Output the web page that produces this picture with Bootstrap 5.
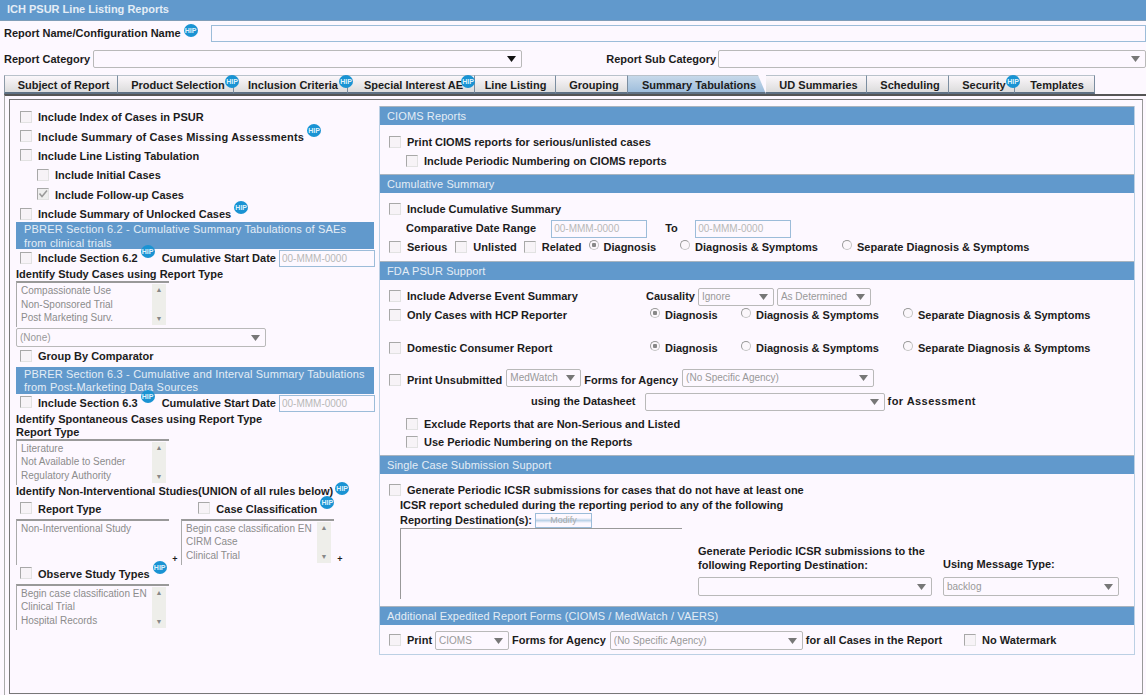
<!DOCTYPE html>
<html lang="en">
<head>
  <meta charset="UTF-8" />
  <title>ICH PSUR Line Listing Reports</title>
  <link href="https://cdn.jsdelivr.net/npm/bootstrap@5.3.0/dist/css/bootstrap.min.css" rel="stylesheet" />
  <style>
    html, body { height: 695px; overflow: hidden; }
    body { background: #fdf8ff; font: bold 11px/13px "Liberation Sans", Arial, sans-serif; color: #1c1c1c; }
    .page-title { height: 21px; background: #6199cc; color: #e4edf6; padding: 2px 7px 0; border-bottom: 1px solid #7f9db8; line-height: 15px; font-size: 11px; }
    .line { display: flex; align-items: center; flex-shrink: 0; white-space: nowrap; }
    .txt-in { border: 1px solid #9cbcd9; background: #fdf8ff; height: 17px; padding: 0 2px; font: 10px/15px "Liberation Sans", sans-serif; color: #b0b0b0; }
    .txt-in::placeholder { color: #b8b8b8; opacity: 1; }
    .sel { appearance: none; border: 1px solid #b9b9b9; border-radius: 2px; background: #fdf8ff url("data:image/svg+xml,%3Csvg xmlns='http://www.w3.org/2000/svg' width='9' height='6'%3E%3Cpath d='M0 0h9L4.500 6z' fill='%23777'/%3E%3C/svg%3E") no-repeat right 5px center; height: 18px; padding: 0 14px 0 3px; font: 10px/16px "Liberation Sans", sans-serif; color: #999; flex-shrink: 0; }
    .cbx { appearance: none; width: 12px; height: 12px; flex-shrink: 0; margin: 0 6px 0 0; border: 1px solid #a8a8a8; border-right-color: #e2e2e2; border-bottom-color: #e2e2e2; background: #f7f3f7; position: relative; top: -1px; }
    .cbx:checked { background: #eee url("data:image/svg+xml,%3Csvg xmlns='http://www.w3.org/2000/svg' width='10' height='10'%3E%3Cpath d='M1.500 4.500l2.500 3 5-6' fill='none' stroke='%23999' stroke-width='1.500'/%3E%3C/svg%3E") no-repeat center; }
    .rdo { appearance: none; width: 10px; height: 10px; flex-shrink: 0; margin: 0 5px 0 0; border-radius: 50%; border: 1px solid #c4c4c4; border-left-color: #999; border-top-color: #999; background: #fbf7fb; position: relative; top: -3px; }
    .rdo:checked { background: radial-gradient(circle, #888 0 2px, #fbf7fb 2.500px); }
    .hip { display: inline-block; position: relative; width: 14px; height: 13px; border-radius: 50%; background: #1a93d3; color: #dff1fb; font: bold 7px/13px "Liberation Sans", sans-serif; text-align: center; flex-shrink: 0; overflow: hidden; z-index: 2; }

    /* top form */
    .name-row { height: 24px; padding-left: 4px; }
    .name-row .hip { top: -3px; margin-left: 3px; }
    .name-input { margin-left: 13px; flex-grow: 1; height: 17px; }
    .cat-row { height: 30px; padding: 0 0 2px 4px; }
    .cat-a { width: 429px; margin-left: 3px; background-image: url("data:image/svg+xml,%3Csvg xmlns='http://www.w3.org/2000/svg' width='9' height='6'%3E%3Cpath d='M0 0h9L4.500 6z' fill='%23111'/%3E%3C/svg%3E"); }
    .cat-lbl { margin-left: 84px; }
    .cat-b { margin-left: 2px; flex-grow: 1; }

    /* tabs */
    .tab-strip { height: 19px; margin-left: 4px; flex-wrap: nowrap; }
    .tab-strip .nav-link { position: relative; display: block; height: 19px; padding: 0 0 0 5px; color: #1c1c1c; font-size: 11px; line-height: 19px; text-align: center; border: 0; border-top: 1px solid #b9c2cb; border-right: 1px solid #7b8da0; border-bottom: 2px solid #5f7184; border-radius: 0; background: linear-gradient(#fbf7fb, #dcdcdc); white-space: nowrap; }
    .tab-strip li:first-child .nav-link { border-left: 1px solid #8d9aa8; }
    .tab-strip .nav-link.active { background: linear-gradient(#c7d9ea, #9fbedc); color: #1c1c1c; clip-path: polygon(0 0, calc(100% - 8px) 0, 100% 100%, 0 100%); }
    .tab-strip .hip { position: absolute; right: -6px; top: -1px; }
    .tab-strip .t4 .hip { right: -1px; }
    .tab-strip .t5 .nav-link { padding-left: 1px; }
    .t1 { width: 114px; } .t2 { width: 116px; } .t3 { width: 114px; } .t4 { width: 127px; } .t5 { width: 81px; } .t6 { width: 72px; }
    .t7 { width: 138px; } .t8 { width: 101px; } .t9 { width: 82px; } .t10 { width: 66px; } .t11 { width: 80px; }

    .tab-body { height: 601px; margin-left: 4px; border-top: 2px solid #555; border-left: 1px solid #aaa; padding: 3px 3px 0 4px; }
    .frame { height: 595px; border: 1px solid #777; border-right-color: #999; display: flex; gap: 5px; padding-left: 6px; }

    /* left column */
    .left-col { width: 358px; flex-shrink: 0; position: relative; padding-top: 8px; }
    .left-col > .line { height: 19.100px; padding-left: 4px; }
    .left-col > .line.opt { height: 19.400px; }
    .left-col > .line.sub { padding-left: 21px; }
    .left-col > .flat { padding-left: 0; height: 13px; }
    .left-col .hip { top: -7px; margin-left: 3px; }
    .left-col .hip-nis { margin-left: 2px; top: -3px; }
    .wide-txt { letter-spacing: .18px; }
    .blue-head { background: #6199cc; color: #e4edf6; font-weight: normal; letter-spacing: .17px; padding: 1px 8px 0; height: 27px; line-height: 13.500px; white-space: nowrap; }
    .first-head { margin-top: -2px; }
    .start-lbl { margin-left: 7px; }
    .date62 { width: 96px; margin-left: 3px; }
    .list-box { width: 153px; height: 46px; display: flex; border-top: 2px solid #999; border-left: 1px solid #aaa; font: 10px/13.500px "Liberation Sans", sans-serif; color: #8c8c8c; flex-shrink: 0; background: #fdf8ff; }
    .list-items { flex-grow: 1; padding: 1px 0 0 4px; overflow: hidden; white-space: nowrap; }
    .list-scroll { width: 14px; margin: 1px 3px 0 0; background: #eeeeea; color: #888; display: flex; flex-direction: column; justify-content: space-between; align-items: center; font-size: 7px; line-height: 12px; flex-shrink: 0; height: 41px; }
    .none-sel { width: 250px; height: 19px; display: block; margin-top: 1px; }
    .two-lists { display: flex; align-items: flex-end; }
    .type-row { margin-top: 2px; }
    .plus { width: 12px; margin-bottom: 2px; text-align: center; font-size: 9px; line-height: 8px; }
    .case-cb { margin-left: 97px; }

    /* right column */
    .right-col { width: 756px; height: 549px; margin-top: 6px; border: 1px solid #bcd0e4; border-top: 0; flex-shrink: 0; }
    .sec-head { background: #6199cc; color: #e4edf6; font-weight: normal; letter-spacing: .12px; height: 19px; padding: 2px 7px 0; line-height: 15px; border-top: 1px solid #a9b4bf; }
    .sec-cioms { height: 49px; padding-top: 8px; }
    .sec-cum { height: 68px; padding-top: 7px; }
    .sec-fda { height: 175px; padding-top: 7px; }
    .sec-single { height: 132px; position: relative; padding-top: 7px; }
    .sec-add { padding-top: 6px; }
    .rline { height: 19px; padding-left: 9px; }
    .rsub { padding-left: 26px; }
    .date-a { width: 96px; margin-left: 15px; height: 18px; }
    .to-lbl { margin-left: 18px; width: 30px; }
    .date-b { width: 96px; height: 18px; }
    .ml-u { margin-left: 8px; } .ml-r { margin-left: 7px; } .ml-d { margin-left: 7px; }
    .ml-ds { margin-left: 24px; } .ml-sd { margin-left: 24px; }
    .cause { margin-left: -4px; }
    .s-ign { width: 76px; margin-left: 3px; } .s-det { width: 94px; margin-left: 3px; }
    .fda-rad { width: 243px; flex-shrink: 0; }
    .rad-d { width: 91px; display: flex; flex-shrink: 0; align-items: center; }
    .rad-ds { width: 162px; display: flex; flex-shrink: 0; align-items: center; }
    .s-med { width: 75px; margin: 0 3px 0 4px; } .s-agency { width: 192px; margin-left: 4px; }
    .s-data { width: 240px; margin: 0 3px 0 9px; }
    .assess { letter-spacing: .45px; }
    .h-dom { height: 30px; } .h-print { height: 32px; } .h-data { height: 29px; } .h-excl { height: 17px; }
    .ds-lbl { padding-left: 151px; }
    .dest-lbl { padding-left: 20px; height: 15px; }
    .dest-top { margin-top: -2px; }
    .modify { width: 57px; height: 15px; padding: 0; margin-left: 3px; border: 1px solid #9cbcd9; border-radius: 0; background: linear-gradient(#fdf8ff 30%, #bcd3e8 50%, #fdf8ff 70%); color: #aaa; font: 9px/13px "Liberation Sans", sans-serif; }
    .dest-box { margin-left: 20px; width: 282px; height: 71px; border-top: 1px solid #999; border-left: 1px solid #999; }
    .gen-lbl { position: absolute; left: 318px; top: 70px; line-height: 14px; }
    .msg-lbl { position: absolute; left: 563px; top: 84px; }
    .s-gen { position: absolute; left: 318px; top: 103px; width: 234px; height: 19px; }
    .s-msg { position: absolute; left: 563px; top: 103px; width: 176px; height: 19px; }
    .s-cioms { width: 74px; margin: 0 3px 0 3px; height: 19px; } .s-ag2 { width: 193px; margin: 0 3px 0 4px; height: 19px; }
    .water { margin-left: 22px; }
  </style>
</head>
<body>
  <div class="page-title">ICH PSUR Line Listing Reports</div>

  <div class="line name-row">Report Name/Configuration Name<span class="hip">HIP</span><input class="txt-in name-input" type="text" /></div>
  <div class="line cat-row">
    <span>Report Category</span><select class="sel cat-a"></select>
    <span class="cat-lbl">Report Sub Category</span><select class="sel cat-b"></select>
  </div>

  <ul class="nav tab-strip">
    <li class="t1"><a class="nav-link" href="#">Subject of Report</a></li>
    <li class="t2"><a class="nav-link" href="#">Product Selection<span class="hip">HIP</span></a></li>
    <li class="t3"><a class="nav-link" href="#">Inclusion Criteria<span class="hip">HIP</span></a></li>
    <li class="t4"><a class="nav-link" href="#">Special Interest AE<span class="hip">HIP</span></a></li>
    <li class="t5"><a class="nav-link" href="#">Line Listing</a></li>
    <li class="t6"><a class="nav-link" href="#">Grouping</a></li>
    <li class="t7"><a class="nav-link active" href="#">Summary Tabulations</a></li>
    <li class="t8"><a class="nav-link" href="#">UD Summaries</a></li>
    <li class="t9"><a class="nav-link" href="#">Scheduling</a></li>
    <li class="t10"><a class="nav-link" href="#">Security<span class="hip">HIP</span></a></li>
    <li class="t11"><a class="nav-link" href="#">Templates</a></li>
  </ul>

  <div class="tab-body">
    <div class="frame">
      <div class="left-col">
        <div class="line opt"><input class="cbx" type="checkbox" disabled /><span>Include Index of Cases in PSUR</span></div>
        <div class="line opt"><input class="cbx" type="checkbox" disabled /><span class="wide-txt">Include Summary of Cases Missing Assessments</span><span class="hip">HIP</span></div>
        <div class="line opt"><input class="cbx" type="checkbox" disabled /><span>Include Line Listing Tabulation</span></div>
        <div class="line opt sub"><input class="cbx" type="checkbox" disabled /><span>Include Initial Cases</span></div>
        <div class="line opt sub"><input class="cbx" type="checkbox" checked disabled /><span>Include Follow-up Cases</span></div>
        <div class="line opt"><input class="cbx" type="checkbox" disabled /><span>Include Summary of Unlocked Cases</span><span class="hip">HIP</span></div>

        <div class="blue-head first-head">PBRER Section 6.2 - Cumulative Summary Tabulations of SAEs<br />from clinical trials</div>
        <div class="line"><input class="cbx" type="checkbox" disabled /><span>Include Section 6.2</span><span class="hip">HIP</span><span class="start-lbl">Cumulative Start Date</span><input class="txt-in date62" type="text" placeholder="00-MMM-0000" disabled /></div>
        <div class="line flat">Identify Study Cases using Report Type</div>
        <div class="list-box">
          <div class="list-items">Compassionate Use<br />Non-Sponsored Trial<br />Post Marketing Surv.</div>
          <div class="list-scroll"><span>▲</span><span>▼</span></div>
        </div>
        <select class="sel none-sel"><option>(None)</option></select>
        <div class="line"><input class="cbx" type="checkbox" disabled /><span>Group By Comparator</span></div>

        <div class="blue-head">PBRER Section 6.3 - Cumulative and Interval Summary Tabulations<br />from Post-Marketing Data Sources</div>
        <div class="line"><input class="cbx" type="checkbox" disabled /><span>Include Section 6.3</span><span class="hip">HIP</span><span class="start-lbl">Cumulative Start Date</span><input class="txt-in date62" type="text" placeholder="00-MMM-0000" disabled /></div>
        <div class="line flat">Identify Spontaneous Cases using Report Type</div>
        <div class="line flat">Report Type</div>
        <div class="list-box">
          <div class="list-items">Literature<br />Not Available to Sender<br />Regulatory Authority</div>
          <div class="list-scroll"><span>▲</span><span>▼</span></div>
        </div>
        <div class="line flat">Identify Non-Interventional Studies(UNION of all rules below)<span class="hip hip-nis">HIP</span></div>
        <div class="line type-row">
          <input class="cbx" type="checkbox" disabled /><span>Report Type</span>
          <input class="cbx case-cb" type="checkbox" disabled /><span>Case Classification</span><span class="hip">HIP</span>
        </div>
        <div class="two-lists">
          <div class="list-box">
            <div class="list-items">Non-Interventional Study</div>
          </div>
          <span class="plus">+</span>
          <div class="list-box">
            <div class="list-items">Begin case classification EN<br />CIRM Case<br />Clinical Trial</div>
            <div class="list-scroll"><span>▲</span><span>▼</span></div>
          </div>
          <span class="plus">+</span>
        </div>
        <div class="line"><input class="cbx" type="checkbox" disabled /><span>Observe Study Types</span><span class="hip">HIP</span></div>
        <div class="list-box">
          <div class="list-items">Begin case classification EN<br />Clinical Trial<br />Hospital Records</div>
          <div class="list-scroll"><span>▲</span><span>▼</span></div>
        </div>
      </div>

      <div class="right-col">
        <div class="sec-head">CIOMS Reports</div>
        <div class="sec-cioms">
          <div class="line rline"><input class="cbx" type="checkbox" disabled />Print CIOMS reports for serious/unlisted cases</div>
          <div class="line rline rsub"><input class="cbx" type="checkbox" disabled />Include Periodic Numbering on CIOMS reports</div>
        </div>

        <div class="sec-head">Cumulative Summary</div>
        <div class="sec-cum">
          <div class="line rline"><input class="cbx" type="checkbox" disabled />Include Cumulative Summary</div>
          <div class="line rline rsub">Comparative Date Range<input class="txt-in date-a" type="text" placeholder="00-MMM-0000" disabled /><span class="to-lbl">To</span><input class="txt-in date-b" type="text" placeholder="00-MMM-0000" disabled /></div>
          <div class="line rline">
            <input class="cbx" type="checkbox" disabled />Serious
            <input class="cbx ml-u" type="checkbox" disabled />Unlisted
            <input class="cbx ml-r" type="checkbox" disabled />Related
            <input class="rdo ml-d" type="radio" name="cum" checked disabled />Diagnosis
            <input class="rdo ml-ds" type="radio" name="cum" disabled />Diagnosis &amp; Symptoms
            <input class="rdo ml-sd" type="radio" name="cum" disabled />Separate Diagnosis &amp; Symptoms
          </div>
        </div>

        <div class="sec-head">FDA PSUR Support</div>
        <div class="sec-fda">
          <div class="line rline"><input class="cbx" type="checkbox" disabled /><span class="fda-rad">Include Adverse Event Summary</span><span class="cause">Causality</span><select class="sel s-ign"><option>Ignore</option></select><select class="sel s-det"><option>As Determined</option></select></div>
          <div class="line rline"><input class="cbx" type="checkbox" disabled /><span class="fda-rad">Only Cases with HCP Reporter</span><span class="rad-d"><input class="rdo" type="radio" name="hcp" checked disabled />Diagnosis</span><span class="rad-ds"><input class="rdo" type="radio" name="hcp" disabled />Diagnosis &amp; Symptoms</span><span class="d-flex align-items-center"><input class="rdo" type="radio" name="hcp" disabled />Separate Diagnosis &amp; Symptoms</span></div>
          <div class="line rline h-dom align-items-end"><input class="cbx" type="checkbox" disabled /><span class="fda-rad">Domestic Consumer Report</span><span class="rad-d"><input class="rdo" type="radio" name="dom" checked disabled />Diagnosis</span><span class="rad-ds"><input class="rdo" type="radio" name="dom" disabled />Diagnosis &amp; Symptoms</span><span class="d-flex align-items-center"><input class="rdo" type="radio" name="dom" disabled />Separate Diagnosis &amp; Symptoms</span></div>
          <div class="line rline h-print align-items-end"><input class="cbx" type="checkbox" disabled />Print Unsubmitted<select class="sel s-med"><option>MedWatch</option></select>Forms for Agency<select class="sel s-agency"><option>(No Specific Agency)</option></select></div>
          <div class="line rline h-data ds-lbl">using the Datasheet<select class="sel s-data"></select><span class="assess">for Assessment</span></div>
          <div class="line rline rsub h-excl"><input class="cbx" type="checkbox" disabled />Exclude Reports that are Non-Serious and Listed</div>
          <div class="line rline rsub"><input class="cbx" type="checkbox" disabled />Use Periodic Numbering on the Reports</div>
        </div>

        <div class="sec-head">Single Case Submission Support</div>
        <div class="sec-single">
          <div class="line rline"><input class="cbx" type="checkbox" disabled />Generate Periodic ICSR submissions for cases that do not have at least one</div>
          <div class="line dest-lbl dest-top">ICSR report scheduled during the reporting period to any of the following</div>
          <div class="line dest-lbl">Reporting Destination(s):<button class="modify" type="button" disabled>Modify</button></div>
          <div class="dest-box"></div>
          <div class="gen-lbl">Generate Periodic ICSR submissions to the<br />following Reporting Destination:</div>
          <div class="msg-lbl">Using Message Type:</div>
          <select class="sel s-gen"></select>
          <select class="sel s-msg"><option>backlog</option></select>
        </div>

        <div class="sec-head">Additional Expedited Report Forms (CIOMS / MedWatch / VAERS)</div>
        <div class="sec-add">
          <div class="line rline"><input class="cbx" type="checkbox" disabled />Print<select class="sel s-cioms"><option>CIOMS</option></select>Forms for Agency<select class="sel s-ag2"><option>(No Specific Agency)</option></select>for all Cases in the Report<input class="cbx water" type="checkbox" disabled />No Watermark</div>
        </div>
      </div>
    </div>
  </div>

  <script src="https://cdn.jsdelivr.net/npm/bootstrap@5.3.0/dist/js/bootstrap.bundle.min.js"></script>
</body>
</html>
